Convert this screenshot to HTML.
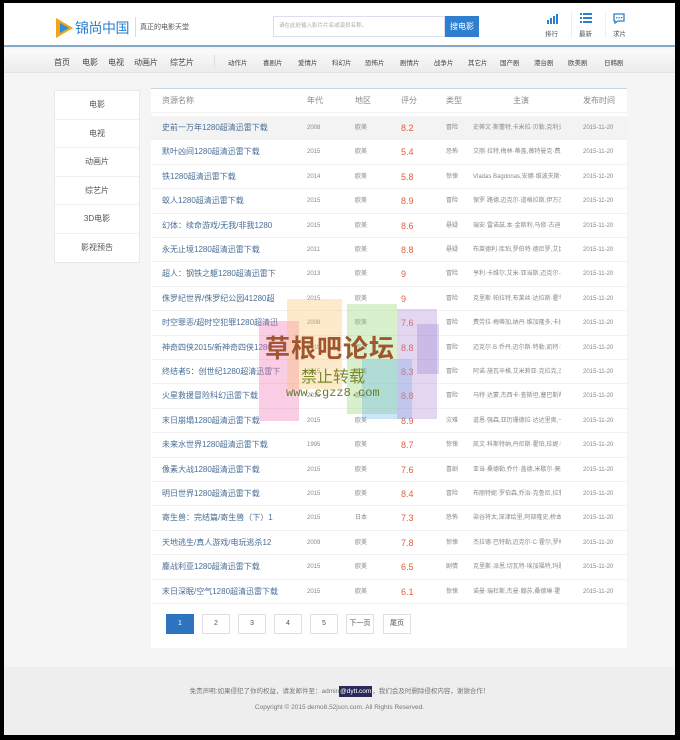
<!DOCTYPE html>
<html><head><meta charset="utf-8">
<style>
*{margin:0;padding:0;box-sizing:border-box}
html,body{width:680px;height:740px;overflow:hidden;background:#000}
body{font-family:"Liberation Sans","Noto Sans CJK SC",sans-serif;position:relative}
#pg{position:absolute;left:4px;top:3px;width:671px;height:732px;background:#f5f5f5;overflow:hidden}
.a{position:absolute;white-space:nowrap}
#hd{position:absolute;left:0;top:0;width:671px;height:44px;background:#fff;border-bottom:2px solid #86a8c6}
#nav{position:absolute;left:0;top:46px;width:671px;height:24px;background:linear-gradient(#fafafa,#ececec);border-bottom:1px solid #e2e2e2;font-size:8px;color:#444}
#side{position:absolute;left:50px;top:87px;width:86px;height:173px;background:#fff;border:1px solid #e8e8e8}
#side div{height:28.6px;line-height:28.6px;text-align:center;font-size:8px;color:#555;border-bottom:1px solid #f0f0f0}
#tb{position:absolute;left:147px;top:85px;width:476px;height:560px;background:#fff;border-top:1px solid #c9d7e5}
.r{position:absolute;left:0;width:476px;height:24.4px;border-bottom:1px solid #f1f1f1;font-size:6px;color:#888}
.r span{position:absolute;top:0;line-height:24px;white-space:nowrap}
.n{left:11px;font-size:8px;color:#4a6e96}
.y{left:156px}.d{left:204px}.s{left:250px;font-size:9px;color:#e0603a}.t{left:295px}.z{left:322px;width:88px;overflow:hidden}.p{left:432px}
.h{font-size:8px;color:#888}
.pb{position:absolute;top:611px;width:28px;height:20px;border:1px solid #e0e0e0;background:#fff;font-size:7px;color:#555;text-align:center;line-height:18px}
#ft{position:absolute;left:0;top:664px;width:671px;height:68px;background:#eeeeee;font-size:6.5px;color:#777;text-align:center}
.sq{position:absolute;opacity:.35}
</style></head><body><div id="pg">
<div id="hd">
 <svg class="a" style="left:50px;top:14px" width="20" height="22"><polygon points="2,1 19,11 2,21" fill="#f2a51c"/><polygon points="6,6 15,11 6,16" fill="#2a8fd8"/></svg>
 <div class="a" style="left:71px;top:15px;font-size:14px;color:#2a7fd0;letter-spacing:-0.5px">锦尚中国</div>
 <div class="a" style="left:131px;top:14px;width:1px;height:20px;background:#ddd"></div>
 <div class="a" style="left:136px;top:19px;font-size:7px;color:#555">真正的电影天堂</div>
 <div class="a" style="left:269px;top:13px;width:172px;height:21px;border:1px solid #dde;background:#fff;font-size:5.5px;color:#aaa;line-height:19px;padding-left:5px">请在此处输入影片片名或演员名称。</div>
 <div class="a" style="left:441px;top:13px;width:34px;height:21px;background:#2f7fd0;color:#fff;font-size:8px;text-align:center;line-height:21px">搜电影</div>
 <svg class="a" style="left:542px;top:11px" width="12" height="10"><rect x="1" y="6" width="2" height="4" fill="#2a7fd0"/><rect x="4" y="4" width="2" height="6" fill="#2a7fd0"/><rect x="7" y="2" width="2" height="8" fill="#2a7fd0"/><rect x="10" y="0" width="2" height="10" fill="#2a7fd0"/></svg>
 <div class="a" style="left:541px;top:25px;font-size:6.5px;color:#555">排行</div>
 <div class="a" style="left:567px;top:9px;width:1px;height:26px;background:#eee"></div>
 <svg class="a" style="left:576px;top:10px" width="12" height="11"><g fill="#2a7fd0"><rect x="0" y="0" width="2" height="2"/><rect x="3" y="0" width="9" height="2"/><rect x="0" y="4" width="2" height="2"/><rect x="3" y="4" width="9" height="2"/><rect x="0" y="8" width="2" height="2"/><rect x="3" y="8" width="9" height="2"/></g></svg>
 <div class="a" style="left:575px;top:25px;font-size:6.5px;color:#555">最新</div>
 <div class="a" style="left:601px;top:9px;width:1px;height:26px;background:#eee"></div>
 <svg class="a" style="left:609px;top:10px" width="12" height="11"><path d="M1 1h10v7H5l-3 2V8H1z" fill="none" stroke="#2a7fd0" stroke-width="1.3"/><rect x="3" y="4" width="1.3" height="1.3" fill="#2a7fd0"/><rect x="5.5" y="4" width="1.3" height="1.3" fill="#2a7fd0"/><rect x="8" y="4" width="1.3" height="1.3" fill="#2a7fd0"/></svg>
 <div class="a" style="left:609px;top:25px;font-size:6.5px;color:#555">求片</div>
</div>
<div id="nav">
 <span class="a" style="left:50px;top:8px">首页</span><span class="a" style="left:78px;top:8px">电影</span><span class="a" style="left:104px;top:8px">电视</span><span class="a" style="left:130px;top:8px">动画片</span><span class="a" style="left:166px;top:8px">综艺片</span>
 <span class="a" style="left:210px;top:6px;width:1px;height:12px;background:#ddd"></span>
 <div class="a" style="left:224px;top:8px;font-size:6.5px">
 <span class="a" style="left:0">动作片</span><span class="a" style="left:35px">喜剧片</span><span class="a" style="left:70px">爱情片</span><span class="a" style="left:104px">科幻片</span><span class="a" style="left:137px">恐怖片</span><span class="a" style="left:172px">剧情片</span><span class="a" style="left:206px">战争片</span><span class="a" style="left:240px">其它片</span><span class="a" style="left:272px">国产剧</span><span class="a" style="left:306px">港台剧</span><span class="a" style="left:340px">欧美剧</span><span class="a" style="left:376px">日韩剧</span></div>
</div>
<div id="side"><div>电影</div><div>电视</div><div>动画片</div><div>综艺片</div><div>3D电影</div><div style="border:none">影视预告</div></div>
<div id="tb">
 <div class="r" style="top:0;height:24px"><span class="n h" style="color:#888">资源名称</span><span class="y h">年代</span><span class="d h">地区</span><span class="s h" style="color:#888;font-size:8px">评分</span><span class="t h">类型</span><span class="z h" style="left:362px">主演</span><span class="p h">发布时间</span></div>
 <div id="rows"></div>
 <div class="sq" style="left:108px;top:232px;width:40px;height:100px;background:#f06fb4"></div>
 <div class="sq" style="left:136px;top:210px;width:55px;height:90px;background:#f9c46a"></div>
 <div class="sq" style="left:196px;top:215px;width:50px;height:110px;background:#8ed46b"></div>
 <div class="sq" style="left:211px;top:270px;width:50px;height:60px;background:#6bb8ea"></div>
 <div class="sq" style="left:246px;top:220px;width:40px;height:110px;background:#b08ad8"></div>
 <div class="sq" style="left:266px;top:235px;width:22px;height:50px;background:#9a8ad0"></div>
 <div class="a" style="left:114px;top:240px;font-size:25px;color:#a0552e;font-weight:bold;letter-spacing:1px;font-family:'Noto Sans CJK SC',sans-serif">草根吧论坛</div>
 <div class="a" style="left:150px;top:274px;font-size:16px;color:#7a8a2a;font-family:'Noto Sans CJK SC',sans-serif">禁止转载</div>
 <div class="a" style="left:135px;top:297px;font-size:12px;color:#6a7a2a;font-family:'Liberation Mono',monospace">www.cgzz8.com</div>
</div>
<div class="pb" style="left:162px;background:#2c74bd;color:#fff;border-color:#2c74bd">1</div>
<div class="pb" style="left:198px">2</div><div class="pb" style="left:234px">3</div><div class="pb" style="left:270px">4</div><div class="pb" style="left:306px">5</div><div class="pb" style="left:342px">下一页</div><div class="pb" style="left:379px">尾页</div>
<div id="ft">
 <div style="position:absolute;top:18px;width:100%">免责声明:如果侵犯了你的权益，请发邮件至：admin<span style="background:#2a2a5a;color:#fff;padding:2px 1px">@dytt.com</span>，我们会及时删除侵权内容，谢谢合作！</div>
 <div style="position:absolute;top:37px;width:100%">Copyright © 2015 demo8.52jscn.com. All Rights Reserved.</div>
</div>
</div>
<script>
var d=[["史前一万年1280超清迅雷下载","2008","欧美","8.2","冒险","史蒂文·斯蕾特,卡米拉·贝勒,克利夫·柯"],
["默叶凶间1280超清迅雷下载","2015","欧美","5.4","恐怖","艾丽·拉特,梅林·蒂盖,薇特曼克·费耿克"],
["铁1280超清迅雷下载","2014","欧美","5.8","惊悚","Vladas Bagdonas,安娜·维波夫斯卡娅,"],
["蚁人1280超清迅雷下载","2015","欧美","8.9","冒险","保罗·路德,迈克尔·道格拉斯,伊万杰琳·"],
["幻体：续命游戏/无我/非我1280","2015","欧美","8.6","悬疑","瑞安·雷诺兹,本·金斯利,马修·古迪,娜塔"],
["永无止境1280超清迅雷下载","2011","欧美","8.8","悬疑","布莱德利·库珀,罗伯特·德尼罗,艾比·考"],
["超人：钢铁之躯1280超清迅雷下","2013","欧美","9","冒险","亨利·卡维尔,艾米·亚当斯,迈克尔·珊农"],
["侏罗纪世界/侏罗纪公园41280超","2015","欧美","9","冒险","克里斯·帕拉特,布莱丝·达拉斯·霍华德,"],
["时空罪恶/超时空犯罪1280超清迅","2008","欧美","7.6","冒险","费劳拉·梅蒂加,纳丹·维加隆多,卡拉·埃"],
["神奇四侠2015/新神奇四侠1280","2015","欧美","8.8","冒险","迈克尔·B·乔丹,迈尔斯·特勒,凯特·玛拉,"],
["终结者5：创世纪1280超清迅雷下","2015","欧美","8.3","冒险","阿诺·施瓦辛格,艾米莉亚·克拉克,杰·科"],
["火星救援冒险科幻迅雷下载","2015","欧美","8.8","冒险","马特·达蒙,杰西卡·查斯坦,塞巴斯蒂安·"],
["末日崩塌1280超清迅雷下载","2015","欧美","8.9","灾难","道恩·强森,亚历珊德拉·达达里奥,卡拉·"],
["未来水世界1280超清迅雷下载","1995","欧美","8.7","惊悚","凯文·科斯特纳,丹尼斯·霍珀,珍妮·特里"],
["像素大战1280超清迅雷下载","2015","欧美","7.6","喜剧","亚当·桑德勒,乔什·盖德,米歇尔·莫纳汉,"],
["明日世界1280超清迅雷下载","2015","欧美","8.4","冒险","布丽特妮·罗伯森,乔治·克鲁尼,拉菲·卡"],
["寄生兽：完结篇/寄生兽（下）1","2015","日本","7.3","恐怖","染谷将太,深津绘里,阿部隆史,桥本爱,"],
["天地逃生/真人游戏/电玩逃杀12","2009","欧美","7.8","惊悚","杰拉德·巴特勒,迈克尔·C·霍尔,罗根·勒"],
["鏖战利亚1280超清迅雷下载","2015","欧美","6.5","剧情","克里斯·派恩,切瓦特·埃加福特,玛歌特·"],
["末日深眠/空气1280超清迅雷下载","2015","欧美","6.1","惊悚","诺曼·瑞杜斯,杰曼·翰苏,桑德琳·霍尔特,"]];
var h="";d.forEach(function(r,i){h+='<div class="r" style="top:'+(27+i*24.4)+'px;'+(i==0?'background:#f3f3f3':'')+'"><span class="n">'+r[0]+'</span><span class="y">'+r[1]+'</span><span class="d">'+r[2]+'</span><span class="s">'+r[3]+'</span><span class="t">'+r[4]+'</span><span class="z">'+r[5]+'</span><span class="p">2015-11-20</span></div>'});
document.getElementById("rows").innerHTML=h;
</script>
</body></html>
